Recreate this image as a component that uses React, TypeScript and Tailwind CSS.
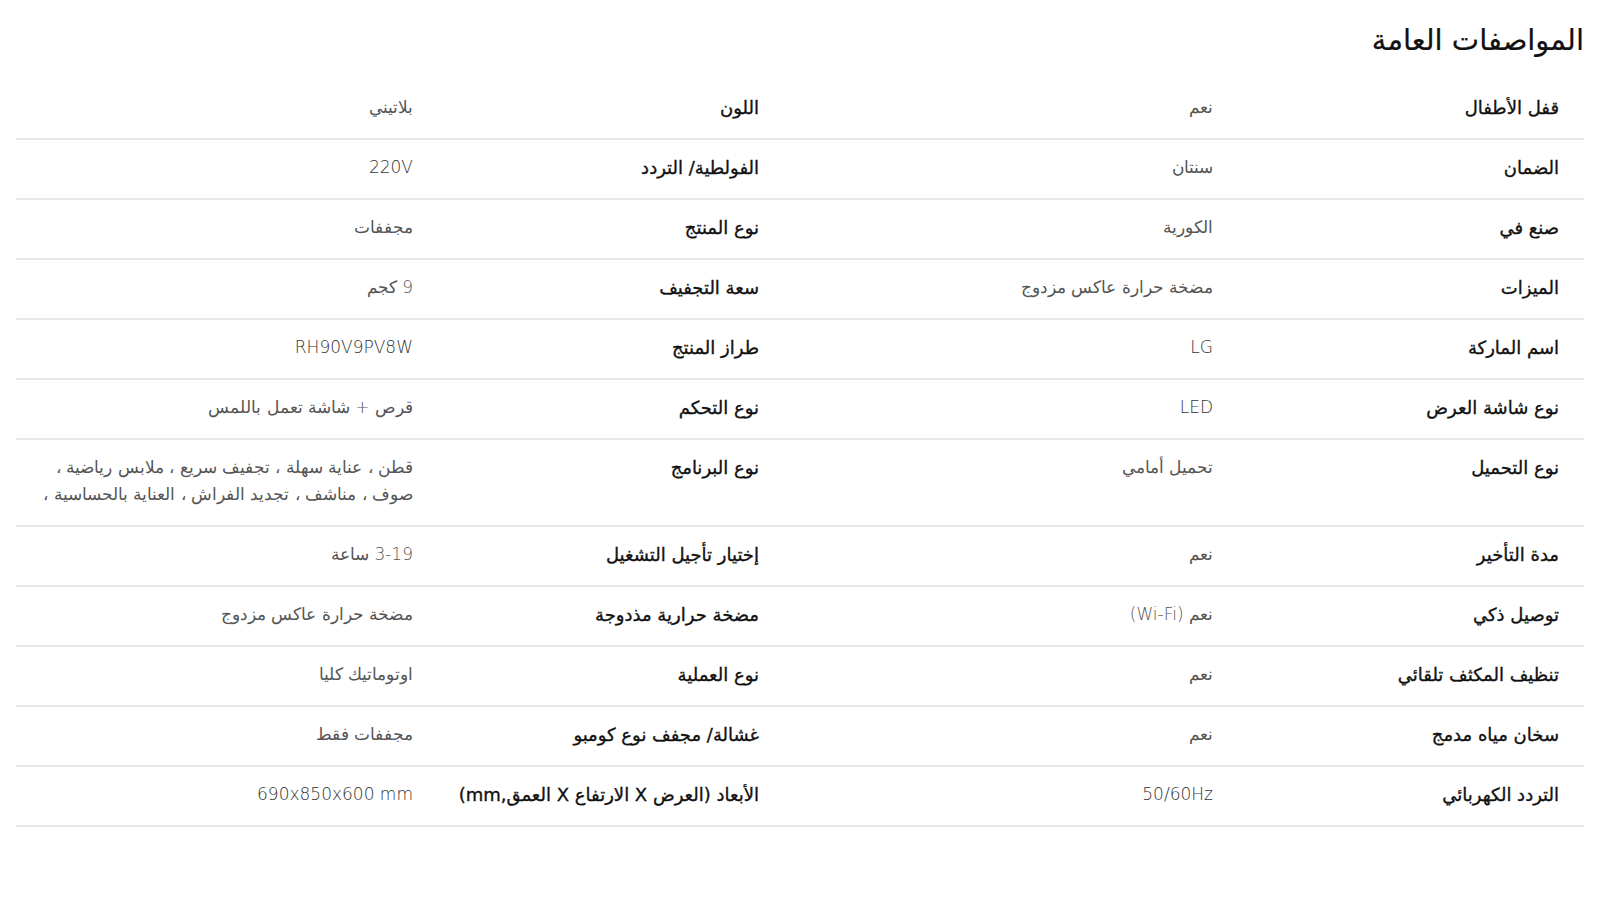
import React from "react";

type Row = { l1: string; v1: string; l2: string; v2: React.ReactNode };

const rows: Row[] = [
  { l1: "قفل الأطفال", v1: "نعم", l2: "اللون", v2: "بلاتيني" },
  { l1: "الضمان", v1: "سنتان", l2: "الفولطية/ التردد", v2: "220V" },
  { l1: "صنع في", v1: "الكورية", l2: "نوع المنتج", v2: "مجففات" },
  { l1: "الميزات", v1: "مضخة حرارة عاكس مزدوج", l2: "سعة التجفيف", v2: "9 كجم" },
  { l1: "اسم الماركة", v1: "LG", l2: "طراز المنتج", v2: "RH90V9PV8W" },
  { l1: "نوع شاشة العرض", v1: "LED", l2: "نوع التحكم", v2: "قرص + شاشة تعمل باللمس" },
  {
    l1: "نوع التحميل",
    v1: "تحميل أمامي",
    l2: "نوع البرنامج",
    v2: (
      <>
        قطن ، عناية سهلة ، تجفيف سريع ، ملابس رياضية ،
        <br />
        صوف ، مناشف ، تجديد الفراش ، العناية بالحساسية ،
      </>
    ),
  },
  { l1: "مدة التأخير", v1: "نعم", l2: "إختيار تأجيل التشغيل", v2: "3-19 ساعة" },
  { l1: "توصيل ذكي", v1: "نعم (Wi-Fi)", l2: "مضخة حرارية مذدوجة", v2: "مضخة حرارة عاكس مزدوج" },
  { l1: "تنظيف المكثف تلقائي", v1: "نعم", l2: "نوع العملية", v2: "اوتوماتيك كليا" },
  { l1: "سخان مياه مدمج", v1: "نعم", l2: "غشالة/ مجفف نوع كومبو", v2: "مجففات فقط" },
  { l1: "التردد الكهربائي", v1: "50/60Hz", l2: "الأبعاد (العرض X الارتفاع X العمق,mm)", v2: "690x850x600 mm" },
];

const labelCls =
  "pr-[25px] text-[18px] font-normal text-[#111] [-webkit-text-stroke:0.35px_#111]";
const valueCls = "pr-[25px] text-[17px] font-light";

const isLatin = (v: React.ReactNode) => typeof v === "string" && /^[\x00-\x7F]+$/.test(v);

export default function App() {
  return (
    <div
      dir="rtl"
      className="min-h-[900px] w-full bg-white px-4 text-[#111]"
      style={{ fontFamily: '"DejaVu Sans", sans-serif' }}
    >
      <h2 className="flex h-[80px] items-start pt-[20px] text-[29px] font-normal leading-[40px] text-[#111] [-webkit-text-stroke:0.2px_#111]">
        المواصفات العامة
      </h2>
      <div className="flex flex-col">
        {rows.map((r, i) => (
          <div
            key={i}
            className="grid grid-cols-[346px_454px_346px_1fr] border-b-2 border-[#e8e8e8] pt-[14px] pb-[17px] leading-[27px]"
          >
            <div className={labelCls}>{r.l1}</div>
            <div className={valueCls + (isLatin(r.v1) ? " text-[#333]" : " text-[#555]")}>{r.v1}</div>
            <div className={labelCls}>{r.l2}</div>
            <div className={valueCls + " pl-[25px]" + (isLatin(r.v2) ? " text-[#333]" : " text-[#555]")}>
              {r.v2}
            </div>
          </div>
        ))}
      </div>
    </div>
  );
}
